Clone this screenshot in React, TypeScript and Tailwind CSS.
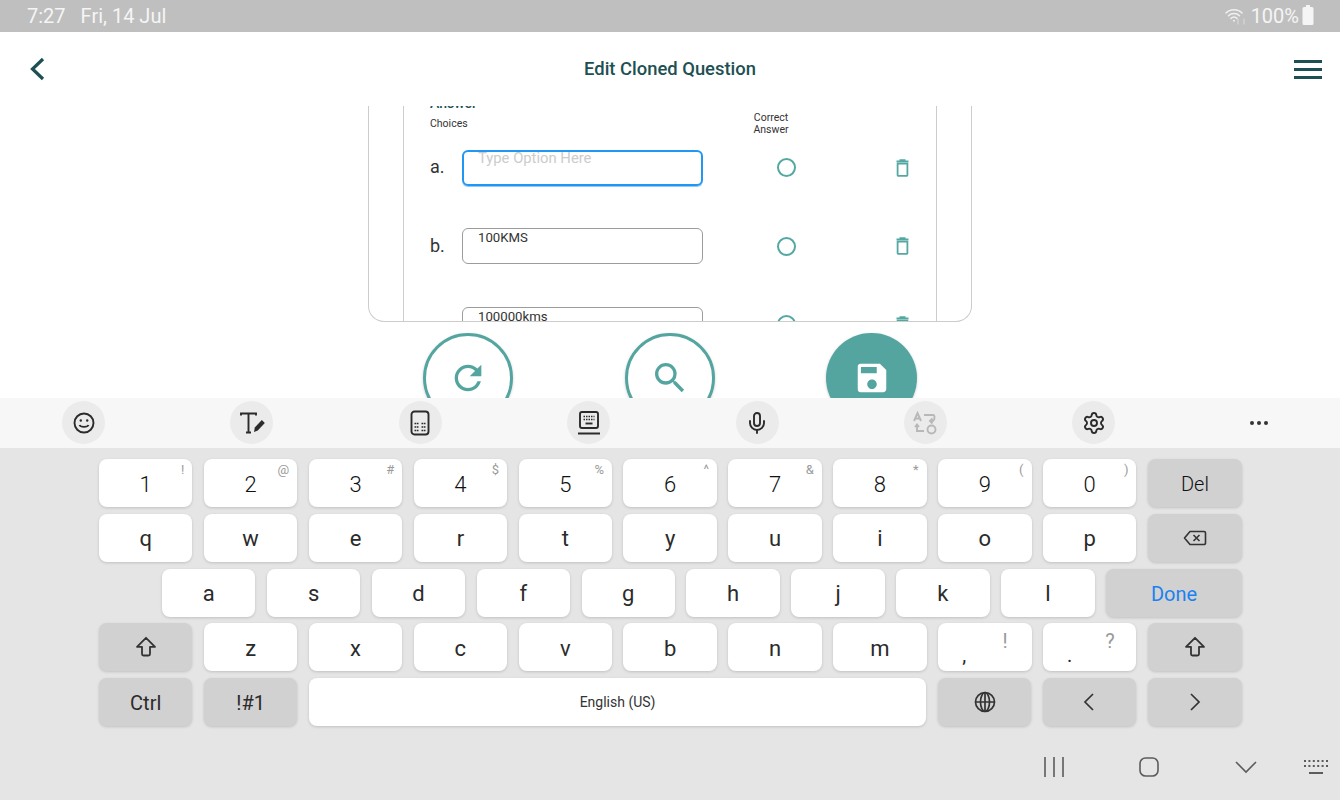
import React from "react";
import { MdRefresh, MdSearch, MdSave } from "react-icons/md";
import { Settings, Mic } from "lucide-react";

const Trash = () => (
  <svg width="13" height="18" viewBox="0 0 13 18" fill="none" className="text-[#54a8a2]">
    <path d="M1.600 4.500h9.800V16a.8.8 0 0 1-.8.8H2.400a.8.8 0 0 1-.8-.8z" stroke="currentColor" strokeWidth="1.800" />
    <path d="M.5 2.400h12M3.500 1h6" stroke="currentColor" strokeWidth="1.600" />
  </svg>
);

function ChoiceRow({ label, text, active, low }: { label: string; text: string; active?: boolean; low?: boolean }) {
  return (
    <div className="flex items-center h-[36px] mb-[42.5px] shrink-0">
      <div className={`w-[32px] text-[18px] text-[#333] ${low ? "mt-[8px]" : "-mt-[2px]"}`}>{label}</div>
      <div
        className={
          active
            ? "w-[241px] h-[36px] shrink-0 rounded-[6px] border-2 border-[#2196f3] shadow-[0_1px_0_rgba(33,150,243,0.5)] pl-[14px] text-[14.8px] leading-[13px] text-[#cccccc]"
            : "w-[241px] h-[36px] shrink-0 rounded-[6px] border border-[#9c9c9c] pl-[15px] pt-[1px] text-[13.2px] leading-[16px] text-[#333]"
        }
      >
        {text}
      </div>
      <div className="ml-[74px] w-[19px] h-[19px] rounded-full border-2 border-[#54a8a2] shrink-0" />
      <div className="ml-[100px] shrink-0 flex">
        <Trash />
      </div>
    </div>
  );
}

const Circle = ({ children, filled }: { children: React.ReactNode; filled?: boolean }) => (
  <div
    className={
      filled
        ? "w-[91px] h-[90px] rounded-full bg-[#54a5a0] text-white flex items-center justify-center shrink-0 text-[38px] shadow-[0_1px_3px_rgba(0,0,0,0.2)]"
        : "w-[90px] h-[90px] rounded-full border-[3px] border-[#54a5a0] bg-white text-[#54a5a0] flex items-center justify-center shrink-0 text-[40px] shadow-[0_1px_3px_rgba(0,0,0,0.2)]"
    }
  >
    {children}
  </div>
);

const ToolIcon = ({ children, faded }: { children: React.ReactNode; faded?: boolean }) => (
  <div className={`w-[43px] h-[43px] shrink-0 rounded-full bg-[#ebebeb] flex items-center justify-center ${faded ? "text-[#b8b8b8]" : "text-[#2b2b2b]"}`}>
    {children}
  </div>
);

const svgProps = { width: 24, height: 24, viewBox: "0 0 24 24", fill: "none", stroke: "currentColor", strokeWidth: 1.9 } as const;

const ShiftIcon = () => (
  <svg width="22" height="22" viewBox="0 0 22 22" fill="none" stroke="#333" strokeWidth="1.800" strokeLinejoin="round">
    <path d="M11 1.800 L20 10.800 H15 V18 a1.500 1.500 0 0 1-1.500 1.500 H8.500 A1.500 1.500 0 0 1 7 18 V10.800 H2 Z" />
  </svg>
);

function Key({ main, sup, gray, big, blue, light, children, size }: { main?: string; sup?: string; gray?: boolean; big?: boolean; blue?: boolean; light?: boolean; children?: React.ReactNode; size?: string }) {
  return (
    <div
      className={`relative h-[48px] rounded-[8px] flex items-center justify-center shadow-[0_1px_3px_rgba(0,0,0,0.16)] ${size ?? "w-[93.4px] shrink-0"} ${gray ? "bg-[#d1d1d1]" : "bg-white"} ${blue ? "text-[#1a82f0]" : light ? "text-[#111111]" : "text-[#2b2b2b]"} ${big ? "text-[20px]" : "text-[22px]"} ${light ? "font-light" : ""}`}
    >
      {main && <span className="pt-[2px]">{main}</span>}
      {children}
      {sup && <span className="absolute right-[8px] top-[2px] text-[13px] font-normal text-[#9a9a9a] leading-[18px]">{sup}</span>}
    </div>
  );
}

function PunctKey({ main, sup }: { main: string; sup: string }) {
  return (
    <div className="relative h-[48px] w-[93.4px] shrink-0 rounded-[8px] bg-white shadow-[0_1px_3px_rgba(0,0,0,0.16)]">
      <span className="absolute left-[24px] top-[20px] text-[20px] leading-[24px] text-[#2b2b2b]">{main}</span>
      <span className="absolute left-[60px] w-[14px] text-center top-[6px] text-[20px] leading-[24px] text-[#9a9a9a]">{sup}</span>
    </div>
  );
}

const row1: [string, string][] = [["1", "!"], ["2", "@"], ["3", "#"], ["4", "$"], ["5", "%"], ["6", "^"], ["7", "&"], ["8", "*"], ["9", "("], ["0", ")"]];

export default function App() {
  return (
    <div className="w-[1340px] h-[800px] overflow-hidden flex flex-col bg-white font-['Roboto',sans-serif]">
      {/* Status bar */}
      <div className="h-[32px] shrink-0 bg-[#bfbfbf] flex items-center pl-[27px] pr-[26px] text-[20px] text-[#f5f5f5]">
        <span>7:27</span>
        <span className="ml-[15px]">Fri, 14 Jul</span>
        <div className="ml-auto flex items-center">
          <svg width="22" height="18" viewBox="0 0 22 18" fill="none" stroke="#f0f0f0" strokeWidth="1.500" strokeLinecap="round">
            <path d="M1 6 C5 1.500 13 1.500 17 6" />
            <path d="M3.500 8.800 C6.500 5.800 11.500 5.800 14.500 8.800" />
            <path d="M6 11.400 C7.800 9.800 10.200 9.800 12 11.400" />
            <circle cx="9" cy="13.800" r="1" fill="#f0f0f0" stroke="none" />
            <path d="M13 12v5M19 17v-5" stroke="#d8d8d8" strokeWidth="1.200" />
          </svg>
          <span className="ml-[4px]">100%</span>
          <svg width="12" height="20" viewBox="0 0 12 20" className="ml-[3px] mb-[3px]">
            <path d="M4 0h4v2h2a1.500 1.500 0 0 1 1.500 1.500V18.500a1.500 1.500 0 0 1-1.500 1.500H2a1.500 1.500 0 0 1-1.500-1.500V3.500A1.500 1.500 0 0 1 2 2h2z" fill="#f5f5f5" />
          </svg>
        </div>
      </div>

      {/* Header */}
      <div className="h-[74px] shrink-0 relative flex items-center justify-center bg-white">
        <svg width="18" height="24" viewBox="0 0 18 24" fill="none" stroke="#1d5052" strokeWidth="3.200" className="absolute left-[28px] top-[25px]">
          <path d="M15 2 L4.500 12 L15 22" />
        </svg>
        <span className="text-[18.4px] font-medium text-[#1d5052]">Edit Cloned Question</span>
        <div className="absolute left-[1294px] top-[28px] w-[28px] flex flex-col gap-[5px]">
          <div className="h-[3px] bg-[#1d5052]" />
          <div className="h-[3px] bg-[#1d5052]" />
          <div className="h-[3px] bg-[#1d5052]" />
        </div>
      </div>

      {/* Card */}
      <div className="h-[216px] shrink-0">
        <div className="ml-[368px] w-[604px] h-[216px] border border-t-0 border-[#cccccc] rounded-b-[16px] overflow-hidden">
          <div className="ml-[34px] w-[534px] h-full border-x border-[#cccccc] pl-[26px] overflow-hidden flex flex-col">
            <div className="-mt-[11px] h-[16px] shrink-0 text-[14px] leading-[16px] font-medium text-[#1d5052]">Answer</div>
            <div className="flex items-center h-[24px] mt-[1px] shrink-0">
              <div className="w-[321px] text-[10.5px] text-[#333]">Choices</div>
              <div className="w-[40px] text-[10.5px] leading-[12px] text-center text-[#333]">Correct Answer</div>
            </div>
            <div className="mt-[13.7px] flex flex-col">
              <ChoiceRow label="a." text="Type Option Here" active />
              <ChoiceRow label="b." text="100KMS" />
              <ChoiceRow label="c." text="100000kms" low />
            </div>
          </div>
        </div>
      </div>

      {/* Action buttons */}
      <div className="h-[76px] shrink-0 overflow-hidden pt-[11px] flex justify-center gap-[111.5px] bg-white">
        <Circle><MdRefresh /></Circle>
        <Circle><MdSearch /></Circle>
        <Circle filled><MdSave /></Circle>
      </div>

      {/* Keyboard toolbar */}
      <div className="h-[50px] shrink-0 bg-[#f7f7f7] pl-[62px] pt-[3px] flex gap-[125.4px]">
        <ToolIcon>
          <svg {...svgProps}><circle cx="12" cy="12" r="9.500" /><path d="M7.500 14c1 2.500 8 2.500 9 0" /><circle cx="8.800" cy="9.500" r="1.200" fill="currentColor" stroke="none" /><circle cx="15.200" cy="9.500" r="1.200" fill="currentColor" stroke="none" /></svg>
        </ToolIcon>
        <ToolIcon>
          <svg {...svgProps} width={28} height={26} viewBox="0 0 28 26"><path d="M3 5.500V3.500H18V5.500M10.500 3.500V22M8 22.500h5" /><path d="M16 22l.8-4.500 7-7.500 3 3-7 7.500z" fill="currentColor" stroke="none" /></svg>
        </ToolIcon>
        <ToolIcon>
          <svg {...svgProps} width={20} height={26} viewBox="0 0 20 26"><rect x="1.500" y="1.500" width="17" height="23" rx="3" /><path d="M4.500 13.500h4M11.500 13.500h4M4.500 17h4M11.500 17h4M4.500 20.500h4M11.500 20.500h4" strokeWidth="1.700" strokeDasharray="1.700 .6" /></svg>
        </ToolIcon>
        <ToolIcon>
          <svg {...svgProps} width={24} height={26} viewBox="0 0 24 26"><rect x="3" y="2" width="18" height="16" rx="2" /><path d="M6.500 6.500h11M6.500 9.500h11" strokeDasharray="1.500 1" strokeWidth="1.500" /><path d="M8.500 13.500h7" /><path d="M1 23.500h22" strokeWidth="2" /></svg>
        </ToolIcon>
        <ToolIcon>
          <Mic size={24} strokeWidth={1.900} />
        </ToolIcon>
        <ToolIcon faded>
          <svg {...svgProps} width={26} height={26} viewBox="0 0 26 26"><path d="M2 11l3.500-8L9 11M3 8.500h5" /><path d="M12 5h9c2 0 2 5 0 6h-3M20.500 8.500L18 11l2.500 2.500" /><path d="M5 14.500V21h7M3 17l2-2.500L7 17" /><circle cx="19.500" cy="19.500" r="4" /></svg>
        </ToolIcon>
        <ToolIcon>
          <Settings size={24} strokeWidth={1.900} />
        </ToolIcon>
        <div className="w-[20px] h-[43px] flex items-center justify-center gap-[3px] ml-[8px]">
          <div className="w-[4px] h-[4px] rounded-full bg-[#333] shrink-0" />
          <div className="w-[4px] h-[4px] rounded-full bg-[#333] shrink-0" />
          <div className="w-[4px] h-[4px] rounded-full bg-[#333] shrink-0" />
        </div>
      </div>

      {/* Keys */}
      <div className="flex-1 bg-[#e5e5e5] pl-[99px] pr-[98px] pt-[11px] flex flex-col gap-[6.750px]">
        <div className="flex gap-[11.500px]">
          {row1.map(([m, s]) => <Key key={m} main={m} sup={s} light />)}
          <Key main="Del" gray big light size="flex-1" />
        </div>
        <div className="flex gap-[11.500px]">
          {"qwertyuiop".split("").map((c) => <Key key={c} main={c} />)}
          <Key gray size="flex-1">
            <svg width="24" height="18" viewBox="0 0 24 18" fill="none" stroke="#333" strokeWidth="1.600" strokeLinejoin="round">
              <path d="M7 2.500h14a1.500 1.500 0 0 1 1.500 1.500v10a1.500 1.500 0 0 1-1.500 1.500H7L1.500 9z" />
              <path d="M10.500 6l6 6M16.500 6l-6 6" />
            </svg>
          </Key>
        </div>
        <div className="flex gap-[11.500px] pl-[63px]">
          {"asdfghjkl".split("").map((c) => <Key key={c} main={c} />)}
          <Key main="Done" gray big blue size="flex-1" />
        </div>
        <div className="flex gap-[11.500px]">
          <Key gray><ShiftIcon /></Key>
          {"zxcvbnm".split("").map((c) => <Key key={c} main={c} />)}
          <PunctKey main="," sup="!" />
          <PunctKey main="." sup="?" />
          <Key gray size="flex-1"><ShiftIcon /></Key>
        </div>
        <div className="flex gap-[11.500px]">
          <Key main="Ctrl" gray big />
          <Key main="!#1" gray big />
          <Key size="w-[617.6px] shrink-0"><span className="text-[14px] text-[#333]">English (US)</span></Key>
          <Key gray>
            <svg {...svgProps} stroke="#333" strokeWidth={1.700}><circle cx="12" cy="12" r="9.500" /><ellipse cx="12" cy="12" rx="4.500" ry="9.500" /><path d="M2.500 12h19M12 2.500v19" /></svg>
          </Key>
          <Key gray>
            <svg width="14" height="20" viewBox="0 0 14 20" fill="none" stroke="#333" strokeWidth="1.700"><path d="M11 2 L3 10 L11 18" /></svg>
          </Key>
          <Key gray size="flex-1">
            <svg width="14" height="20" viewBox="0 0 14 20" fill="none" stroke="#333" strokeWidth="1.700"><path d="M3 2 L11 10 L3 18" /></svg>
          </Key>
        </div>

        {/* Nav bar */}
        <div className="flex items-center h-[24px] mt-[22px] -mr-[98px] -ml-[99px] text-[#5c5c5c]">
          <svg width="22" height="22" viewBox="0 0 22 22" stroke="currentColor" strokeWidth="1.600" className="ml-[1043px]"><path d="M2 1v20M11 1v20M20 1v20" /></svg>
          <svg width="20" height="20" viewBox="0 0 20 20" fill="none" stroke="currentColor" strokeWidth="1.600" className="ml-[74px]"><rect x="1" y="1" width="18" height="18" rx="5.500" /></svg>
          <svg width="22" height="14" viewBox="0 0 22 14" fill="none" stroke="currentColor" strokeWidth="1.600" className="ml-[76px]"><path d="M1 2 L11 12 L21 2" /></svg>
          <svg width="26" height="16" viewBox="0 0 26 16" fill="none" stroke="currentColor" className="ml-[46px]">
            <path d="M1 2h24M1 7h24" strokeWidth="2" strokeDasharray="2 2.400" />
            <path d="M6 14h14" strokeWidth="2" />
          </svg>
        </div>
      </div>
    </div>
  );
}
